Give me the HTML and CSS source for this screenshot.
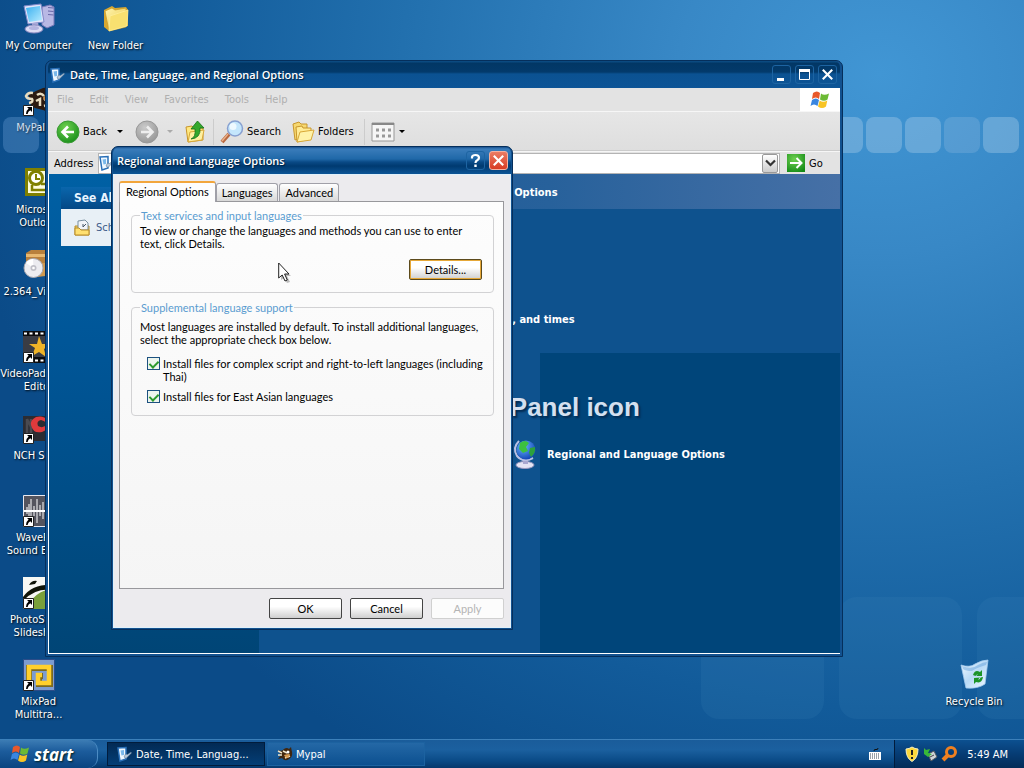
FILE: index.html
```html
<!DOCTYPE html>
<html lang="en">
<head>
  <meta charset="UTF-8">
  <meta name="viewport" content="width=device-width, initial-scale=1.0">
  <title>Regional and Language Options</title>
  <link rel="stylesheet" href="styles.css">
</head>
<body>
  <!-- shared icons -->
  <svg class="defs" aria-hidden="true">
    <defs>
      <linearGradient id="gScreen" x1="0" y1="0" x2="1" y2="1"><stop offset="0" stop-color="#3ab0f0"/><stop offset="1" stop-color="#b8ecff"/></linearGradient>
      <linearGradient id="gFolder" x1="0" y1="0" x2="1" y2="1"><stop offset="0" stop-color="#fff6b0"/><stop offset="1" stop-color="#eac440"/></linearGradient>
      <radialGradient id="gGreen" cx=".4" cy=".3" r=".8"><stop offset="0" stop-color="#6fd050"/><stop offset="1" stop-color="#128a16"/></radialGradient>
      <radialGradient id="gGrey" cx=".4" cy=".3" r=".8"><stop offset="0" stop-color="#cacaca"/><stop offset="1" stop-color="#929292"/></radialGradient>
      <radialGradient id="gGlobe" cx=".35" cy=".3" r=".8"><stop offset="0" stop-color="#6cb8ff"/><stop offset="1" stop-color="#0a3ab0"/></radialGradient>
      <linearGradient id="gBin" x1="0" y1="0" x2="1" y2="1"><stop offset="0" stop-color="#f4fbff"/><stop offset=".5" stop-color="#b8daf6"/><stop offset="1" stop-color="#f0f8ff"/></linearGradient>
      <symbol id="flag" viewBox="0 0 20 18">
        <path d="M3 2Q7-1 10 2L9 8Q6 5 2 8Z" fill="#e8582a"/>
        <path d="M11 2.500Q14 5 19 2.500L17.500 8.500Q14 11 10 8.500Z" fill="#6cba34"/>
        <path d="M2 9Q6 6 9 9L7.500 15Q4 12 .5 15Z" fill="#3a86e0"/>
        <path d="M9.700 9.500Q13 12 17.300 9.500L16 15.500Q12 18.500 8 15.500Z" fill="#f8c424"/>
      </symbol>
      <symbol id="panel" viewBox="0 0 16 16">
        <path d="M1 2L9 1.500V13L3 15Z" fill="#f0f8ff" stroke="#2a70b8" stroke-width="1.500"/>
        <path d="M3.500 4.500L7 4V9L4.500 9.500Z" fill="#7ab8ea"/>
        <path d="M7 11L8.500 8L10.500 8.500L14 6L14.500 7L11 10.500L9 12.500Z" fill="#b8c8d8" stroke="#46688a" stroke-width=".5"/>
      </symbol>
      <symbol id="shortcut" viewBox="0 0 11 11">
        <path d="M.5.5H10.500V10.500H.5Z" fill="#fff" stroke="#222"/>
        <path d="M4 2H9V7L7.300 5.300Q5 6.500 4.600 9H3Q2.800 6 5.600 3.600Z" fill="#000"/>
      </symbol>
      <symbol id="raccoon" viewBox="0 0 16 16">
        <path d="M1 4Q5 6 7 3Q10 1 12 3L14 1L15 6Q16 11 12 13Q8 16 5 12L1 13L4 9Z" fill="#40260f"/>
        <path d="M1 5L5 7M1 9L5 9M6 5L10 7M8 12L13 10" stroke="#f0e4c8" stroke-width="1.500"/>
        <circle cx="11" cy="6" r="1.500" fill="#fff"/><path d="M7 9Q10 8 13 8L11 12Q8 12 7 9Z" fill="#d89a50"/>
      </symbol>
      <symbol id="close" viewBox="0 0 18 18">
        <path d="M4 4L14 14M14 4L4 14" stroke="#fff" stroke-width="2.200"/>
      </symbol>
      <symbol id="folders" viewBox="0 0 24 24">
        <path d="M2 4L8 2L10 4L16 4V16L4 20Z" fill="#f6d870" stroke="#c8962c"/>
        <path d="M5 7L11 6L12 8L20 8V19L6 22Z" fill="#ffeb94" stroke="#c8962c"/>
        <path d="M6 22L9 12L23 10L20 20Z" fill="#fff2a8" stroke="#d8a838"/>
      </symbol>
    </defs>
  </svg>

  <main class="desktop">
    <div class="tiles"><i></i><i></i><i></i><i></i><i></i></div>
    <div class="left-tile"></div>
    <div class="big-tiles"><i></i><i></i><i></i></div>

    <nav class="icons">
      <a class="icon" href="#">
        <svg width="32" height="32" viewBox="0 0 32 32">
          <path d="M19 4L27 2L31 4V22L24 25L19 22Z" fill="#b8b8e4" stroke="#7878b8"/>
          <path d="M25 4.500L30.500 5M25 8L30.500 8.500M25 11.500L30.500 12" stroke="#6868a8"/>
          <path d="M1 3L18 1L21 19L5 21Z" fill="#e0e4fa" stroke="#8088c8"/>
          <path d="M3 5L17 3L19 17L6 19Z" fill="url(#gScreen)"/>
          <path d="M9 20L15 19.500L16 24H9Z" fill="#a8a8d8"/>
          <ellipse cx="11" cy="26" rx="9" ry="4" fill="#dcdcf4" stroke="#8888c0"/>
          <ellipse cx="11" cy="25" rx="5" ry="2" fill="#b4b4e0"/>
        </svg>
        <span>My Computer</span>
      </a>
      <a class="icon" href="#">
        <svg width="32" height="32" viewBox="0 0 32 32">
          <path d="M5 7Q9 9 13 6L20 3Q28 2 31 8V24Q26 28 20 25L12 23L8 20Z" fill="#2c1a10"/>
          <path d="M10 8Q5 7 3 11Q4 14 9 14Q11 17 6 18M14 10Q18 7 21 11M13 16L17 14V21M21 15Q26 12 26 16M21 21L28 19" fill="none" stroke="#e8dcc0" stroke-width="2.500"/>
          <circle cx="22" cy="13" r="2" fill="#c88848"/>
          <use href="#shortcut" y="20" width="11" height="11"/>
        </svg>
        <span>MyPal 68</span>
      </a>
      <a class="icon" href="#">
        <svg width="32" height="32" viewBox="0 0 32 32">
          <path d="M2 1H31V29H2Z" fill="#808000"/><path d="M5 4H29V26H5Z" fill="#fffde0"/>
          <circle cx="13" cy="11" r="6.500" fill="#fff" stroke="#808000" stroke-width="3"/>
          <path d="M13 7V12H17" fill="none" stroke="#808000" stroke-width="2"/>
          <path d="M9 18V23H24V17H18" fill="none" stroke="#808000" stroke-width="2.500"/>
        </svg>
        <span>Microsoft<br>Outlook</span>
      </a>
      <a class="icon" href="#">
        <svg width="32" height="32" viewBox="0 0 32 32">
          <path d="M3 4L8 1H31V14H3Z" fill="#b8803c"/><path d="M3 5H31V8H3Z" fill="#e8b870"/><path d="M10 14H31V26L14 28Z" fill="#d09a50"/>
          <circle cx="10.500" cy="19" r="9.500" fill="#ececf0" stroke="#a8a8b0"/>
          <path d="M10.500 19L3 14A9 9 0 0 1 10 10Z" fill="#fff"/>
          <circle cx="10.500" cy="19" r="3" fill="#c0c0c8"/><circle cx="10.500" cy="19" r="1.300" fill="#fff"/>
        </svg>
        <span>2.364_Video...</span>
      </a>
      <a class="icon" href="#">
        <svg width="32" height="32" viewBox="0 0 32 32">
          <path d="M0 0H32V32H0Z" fill="#0c0c0e"/><path d="M0 5H32V26H0Z" fill="#3a3c44"/>
          <path d="M1 2.500H32M12 29.500H32" stroke="#fff" stroke-width="2" stroke-dasharray="3 2.500"/>
          <path d="M16 5L19 13H27L21 18L23 26L16 21L9 25L12 17L6 13L14 13Z" fill="#f0b428"/>
          <use href="#shortcut" y="21" width="11" height="11"/>
        </svg>
        <span>VideoPad Video<br>Editor</span>
      </a>
      <a class="icon" href="#">
        <svg width="32" height="32" viewBox="0 0 32 32">
          <path d="M0 3H32V28H0Z" fill="#2c2c32"/>
          <path d="M4 6V22M4 6L8 14M8 6V22" stroke="#4a4a50" stroke-width="2.500"/>
          <path d="M25 7Q20 2 13 4Q7 7 8 12Q10 21 19 19L25 16V11Q20 16 15 13Q13 8 18 7Q22 8 23 10Z" fill="#e03a3c"/>
          <use href="#shortcut" y="20" width="11" height="11"/>
        </svg>
        <span>NCH Suite</span>
      </a>
      <a class="icon" href="#">
        <svg width="32" height="32" viewBox="0 0 32 32">
          <path d="M.5.5H31.500V31.500H.5Z" fill="#54545e" stroke="#e8e8f0"/>
          <path d="M1 16H31" stroke="#fff" stroke-width="2"/>
          <path d="M4 12V19M6 9V22M8 4V27M11 11V21M14 4V28M17 10V21M20 7V24M23 11V20M26 8V23M29 11V20" stroke="#fff"/>
          <use href="#shortcut" y="21" width="11" height="11"/>
        </svg>
        <span>WavePad<br>Sound Editor</span>
      </a>
      <a class="icon" href="#">
        <svg width="32" height="32" viewBox="0 0 32 32">
          <path d="M0 0H32V32H0Z" fill="#f8f8f4"/><path d="M4 32Q10 14 32 11V32Z" fill="#7aa03a"/>
          <path d="M0 20Q10 6 32 8V13Q12 10 0 24Z" fill="#101408"/><path d="M6 8Q9 3 14 4L12 7Z" fill="#101408"/>
          <use href="#shortcut" y="21" width="11" height="11"/>
        </svg>
        <span>PhotoStage<br>Slideshow</span>
      </a>
      <a class="icon" href="#">
        <svg width="32" height="32" viewBox="0 0 32 32">
          <path d="M.5.5H31.500V31.500H.5Z" fill="#7c9cd0" stroke="#2c4c88"/>
          <path d="M6 26V9H27V25H16V17H20" fill="none" stroke="#7a6a20" stroke-width="6"/>
          <path d="M6 25V8H26V24H15V16H19" fill="none" stroke="#ffd02c" stroke-width="4.500"/>
          <use href="#shortcut" y="21" width="11" height="11"/>
        </svg>
        <span>MixPad<br>Multitra...</span>
      </a>
      <a class="icon" href="#">
        <svg width="32" height="32" viewBox="0 0 32 32">
          <path d="M4 7L12 3L15 5L26 4L28 7V23L9 28L4 24Z" fill="#d8a830"/>
          <path d="M5 8L12 5L15 7L26 5V24L9 28Z" fill="url(#gFolder)" stroke="#c89a28" stroke-width=".7"/>
          <path d="M9 28L10 13L28 7L27 23Z" fill="#f8e070" stroke="#fff0a0" stroke-width=".7"/>
        </svg>
        <span>New Folder</span>
      </a>
    </nav>

    <a class="icon bin" href="#">
      <svg width="32" height="32" viewBox="0 0 32 32">
        <path d="M3 6Q12 9 17 5Q24 1 30 1L27 25Q20 30 8 29Q6 20 3 6Z" fill="url(#gBin)" stroke="#a4ccf0" stroke-width=".8"/>
        <path d="M4 7Q14 11 20 6Q25 3 29 3L28 6Q18 9 14 12Q8 12 5 10Z" fill="#6aa4dc" opacity=".5"/>
        <path d="M15 16Q17 10 22 13L24 11V17H18L20 15.500Q18 15 17.500 17ZM25 18Q24 25 18 23L16 25V19L22 18.500L20 20.500Q22 21 22.500 18.500Z" fill="#1c9428"/>
      </svg>
      <span>Recycle Bin</span>
    </a>

    <section class="window explorer">
      <header class="titlebar">
        <svg width="16" height="16"><use href="#panel"/></svg>
        <h1>Date, Time, Language, and Regional Options</h1>
        <div class="captions">
          <button aria-label="Minimize"><svg width="17" height="17"><path d="M4 12H11V15H4Z" fill="#fff"/></svg></button>
          <button aria-label="Maximize"><svg width="17" height="17"><path d="M3.500 4.500H13.500V13.500H3.500Z" fill="none" stroke="#fff"/><path d="M3 4.500H14" stroke="#fff" stroke-width="3"/></svg></button>
          <button aria-label="Close"><svg width="17" height="17"><use href="#close"/></svg></button>
        </div>
      </header>

      <nav class="menubar">
        <button>File</button><button>Edit</button><button>View</button><button>Favorites</button><button>Tools</button><button>Help</button>
        <div class="brand"><svg width="20" height="18"><use href="#flag"/></svg></div>
      </nav>

      <div class="toolbar">
        <button class="nav-btn">
          <svg width="24" height="24" viewBox="0 0 24 24"><circle cx="12" cy="12" r="11" fill="url(#gGreen)" stroke="#3a9a34"/><path d="M18 12H7M12 6.500L6.500 12L12 17.500" fill="none" stroke="#fff" stroke-width="2.600"/></svg>
          Back
        </button>
        <i class="drop"></i>
        <button class="nav-btn forward" aria-label="Forward">
          <svg width="24" height="24" viewBox="0 0 24 24"><circle cx="12" cy="12" r="11" fill="url(#gGrey)" stroke="#989898"/><path d="M6 12H17M12 6.500L17.500 12L12 17.500" fill="none" stroke="#eee" stroke-width="2.600"/></svg>
        </button>
        <i class="drop faint"></i>
        <button class="nav-btn up" aria-label="Up">
          <svg width="24" height="24" viewBox="0 0 24 24">
            <path d="M3 7L9 6L11 8L20 8V20L5 22Z" fill="#ffe880" stroke="#c8962c"/><path d="M5 22L7 12L21 10L19 20Z" fill="#fff0a0" stroke="#d8a838"/>
            <path d="M8 19Q13 17 12 9H8L14.500 1L21 8H17Q18 18 8 19Z" fill="#34a82c" stroke="#14701a" stroke-width=".8"/>
          </svg>
        </button>
        <i class="sep"></i>
        <button class="nav-btn">
          <svg width="24" height="24" viewBox="0 0 24 24"><path d="M2 22L9 14" stroke="#b86840" stroke-width="4"/><path d="M2 21L8 14" stroke="#eab088" stroke-width="1.500"/><circle cx="15" cy="8.500" r="7.500" fill="#c4e6fc" stroke="#88a0d0" stroke-width="1.500"/><circle cx="13" cy="6.500" r="3.500" fill="#eef9ff"/></svg>
          Search
        </button>
        <button class="nav-btn folders">
          <svg width="24" height="24"><use href="#folders"/></svg>
          Folders
        </button>
        <i class="sep"></i>
        <button class="nav-btn views" aria-label="Views">
          <svg width="24" height="24" viewBox="0 0 24 24">
            <path d="M1 3H23V21H1Z" fill="#f6f6f6" stroke="#989898"/><path d="M1 4H23" stroke="#888" stroke-width="2"/>
            <path d="M5 10H8M11 10H14M17 10H20M5 16H8M11 16H14M17 16H20" stroke="#999" stroke-width="3"/>
          </svg>
        </button>
        <i class="drop"></i>
      </div>

      <form class="address">
        <label for="address">Address</label>
        <div class="address-box">
          <svg width="16" height="16"><use href="#panel"/></svg>
          <input id="address" type="text">
          <button type="button" aria-label="Show addresses"><svg width="11" height="8"><path d="M1 1.500L5.500 6L10 1.500" fill="none" stroke="#333" stroke-width="2.200"/></svg></button>
        </div>
        <button type="button" class="go">
          <svg width="18" height="18"><path d="M0 0H18V18H0Z" fill="url(#gGreen)"/><path d="M3 9H14M9.500 4L14.500 9L9.500 14" fill="none" stroke="#fff" stroke-width="2"/></svg>
          Go
        </button>
      </form>

      <div class="content">
        <aside>
          <div class="see-also">
            <h2>See Also</h2>
            <a href="#">
              <svg width="18" height="18" viewBox="0 0 18 18"><path d="M2 7H16V16H2Z" fill="#f4d868" stroke="#b88c28"/><path d="M5 2L12 1L15 4V11H5Z" fill="#f0f4f8" stroke="#7890a0"/><path d="M10 5V8L13 5" fill="none" stroke="#456"/><path d="M2 16V9H6L8 11H16V16Z" fill="#ffe070" stroke="#b88c28"/></svg>
              Scheduled Tasks
            </a>
          </div>
        </aside>
        <div class="pane">
          <h2 class="band">Date, Time, Language, and Regional Options</h2>
          <div class="tasks">
            <p>Change the format of numbers, dates, and times</p>
            <h3>or pick a Control Panel icon</h3>
            <a href="#">
              <svg width="32" height="32" viewBox="0 0 32 32">
                <ellipse cx="16" cy="27" rx="9" ry="3.500" fill="#e4e4f4" stroke="#9898c0"/><path d="M14 21H19V26H14Z" fill="#a8a8d0"/>
                <path d="M10 3Q3 10 8 18Q14 25 24 20" fill="none" stroke="#b8c0e4" stroke-width="2"/>
                <circle cx="17" cy="12" r="9.500" fill="url(#gGlobe)"/>
                <path d="M11 5Q16 1 20 5L17 9L19 13L14 15L10 11Z" fill="#3cc040"/><path d="M21 10L26 9Q27 15 22 19L20 15Z" fill="#2ca03c"/>
              </svg>
              Regional and Language Options
            </a>
          </div>
        </div>
      </div>
    </section>

    <section class="window dialog" role="dialog" aria-labelledby="dialogTitle">
      <header class="titlebar">
        <h1 id="dialogTitle">Regional and Language Options</h1>
        <div class="captions">
          <button aria-label="Help"><svg width="17" height="17"><path d="M5 6.500V5Q5.500 3 8.500 3Q12 3 12 5.700Q12 7.200 10.200 8.300Q8.500 9.200 8.500 11" fill="none" stroke="#fff" stroke-width="2.200"/><path d="M7.300 12.500H9.700V15H7.300Z" fill="#fff"/></svg></button>
          <button class="red" aria-label="Close"><svg width="17" height="17"><use href="#close"/></svg></button>
        </div>
      </header>
      <div class="dialog-body">
        <div class="tabs" role="tablist">
          <button class="active" role="tab">Regional Options</button>
          <button role="tab">Languages</button>
          <button role="tab">Advanced</button>
        </div>
        <div class="sheet">
          <fieldset>
            <legend>Text services and input languages</legend>
            <p>To view or change the languages and methods you can use to enter text, click Details.</p>
            <div class="right"><button class="btn focus">Details...</button></div>
          </fieldset>
          <fieldset class="support">
            <legend>Supplemental language support</legend>
            <p>Most languages are installed by default. To install additional languages, select the appropriate check box below.</p>
            <div class="check">
              <input type="checkbox" id="complex" checked>
              <label for="complex">Install files for complex script and right-to-left languages (including Thai)</label>
            </div>
            <div class="check">
              <input type="checkbox" id="eastAsian" checked>
              <label for="eastAsian">Install files for East Asian languages</label>
            </div>
          </fieldset>
        </div>
        <footer>
          <button class="btn">OK</button>
          <button class="btn">Cancel</button>
          <button class="btn" disabled>Apply</button>
        </footer>
      </div>
    </section>

    <svg class="cursor" width="14" height="22" viewBox="0 0 14 22">
      <path d="M3 4L13 14H9L12 20L9 21L6 16L3 18Z" fill="#000" opacity=".25"/>
      <path d="M.7 1V16L4.200 13L7 19L9.300 18L6.600 12H11Z" fill="#fff" stroke="#222"/>
    </svg>
  </main>

  <footer class="taskbar">
    <button class="start"><svg width="20" height="18"><use href="#flag"/></svg>start</button>
    <button class="task current"><svg width="16" height="16"><use href="#panel"/></svg>Date, Time, Languag...</button>
    <button class="task"><svg width="16" height="16"><use href="#raccoon"/></svg>Mypal</button>
    <svg class="keyboard" width="14" height="14" viewBox="0 0 14 14"><path d="M6 4Q6 2 8 2.500Q10 3 10 1" fill="none" stroke="#111"/><path d="M1 5H13V13H1Z" fill="#fff"/><path d="M2 7H12M2 9H12M2 11H12" stroke="#345" stroke-dasharray="1 1"/></svg>
    <div class="tray">
      <svg width="16" height="16"><path d="M8 1Q11 3 14 3Q14 12 8 15.500Q2 12 2 3Q5 3 8 1Z" fill="#fcd83c" stroke="#f8f0c0"/><path d="M8 4V9M8 11V13" stroke="#222" stroke-width="2"/></svg>
      <svg width="16" height="16"><path d="M6 8L12 5L15 11L9 15Z" fill="#d0d4d8" stroke="#505860"/><path d="M8 11L12 9" stroke="#444"/><path d="M2 2L4 4L8 3L6 7L10 8L6 11L2 8Z" fill="#38b838"/></svg>
      <svg width="18" height="16"><circle cx="11" cy="6" r="4.500" fill="none" stroke="#f08020" stroke-width="3"/><path d="M8 9L3 14" stroke="#f08020" stroke-width="4"/></svg>
      <time>5:49 AM</time>
    </div>
  </footer>
</body>
</html>
```
FILE: styles.css
```css
* {
  box-sizing: border-box;
}
body {
  margin: 0;
  min-height: 100vh;
  display: flex;
  flex-direction: column;
  overflow: hidden;
  font-family: "DejaVu Sans Condensed", "DejaVu Sans", sans-serif;
  font-size: 11px;
  line-height: 13px;
}
button, input {
  font: inherit;
  color: inherit;
  padding: 0;
  margin: 0;
  border: none;
  background: none;
}
h1, h2, h3, p, fieldset {
  margin: 0;
}
a {
  color: inherit;
  text-decoration: none;
}
svg {
  flex: none;
}
.defs {
  position: absolute;
  width: 0;
  height: 0;
}

/* desktop */
.desktop {
  position: relative;
  flex: 1;
  overflow: hidden;
  background: radial-gradient(ellipse 90% 110% at 86% 10%, #4196d4 0%, #3888c6 22%, #2270ae 52%, #125b9a 78%, #0b4b88 100%);
}
.tiles {
  position: absolute;
  top: 117px;
  right: 5px;
  display: flex;
  gap: 3px;
}
.tiles i, .left-tile {
  width: 36px;
  height: 36px;
  border-radius: 8px;
  background: rgba(160, 200, 230, 0.42);
}
.tiles i:nth-child(4) {
  background: rgba(150, 190, 225, 0.28);
}
.left-tile {
  position: absolute;
  left: 3px;
  top: 117px;
  background: rgba(110, 160, 215, 0.35);
}
.big-tiles {
  position: absolute;
  left: 701px;
  top: 597px;
  display: flex;
  gap: 15px;
}
.big-tiles i {
  width: 123px;
  height: 122px;
  border-radius: 18px;
  background: rgba(70, 140, 190, 0.14);
}
.icons {
  display: grid;
  grid-template-rows: repeat(9, 82px);
  grid-auto-columns: 77px;
  grid-auto-flow: column;
  width: max-content;
}
.icon {
  display: flex;
  flex-direction: column;
  align-items: center;
  gap: 4px;
  padding-top: 3px;
  color: #fff;
  text-align: center;
  text-shadow: 1px 1px 2px #000;
  white-space: nowrap;
}
.bin {
  position: absolute;
  right: 11px;
  bottom: 31px;
  width: 78px;
}

/* windows */
.window {
  position: absolute;
  display: flex;
  flex-direction: column;
  border: 1px solid #052f5c;
  border-radius: 7px 7px 0 0;
  background: #12518f;
}
.titlebar {
  display: flex;
  align-items: center;
  gap: 4px;
  height: 27px;
  padding: 0 3px 0 2px;
  border-radius: 6px 6px 0 0;
  color: #fff;
}
.titlebar h1 {
  flex: 1;
  font-family: "Open Sans", sans-serif;
  font-size: 11px;
  font-weight: 600;
  text-shadow: 1px 1px 1px #01203f;
}
.captions {
  display: flex;
  gap: 4px;
}
.captions button {
  width: 19px;
  height: 19px;
  border: 1px solid #1d64a2;
  border-radius: 3px;
}
.captions svg {
  display: block;
}
.captions .red {
  border-color: #f4b0a0;
  background: linear-gradient(#ea7c64, #d83c24);
}

/* explorer */
.explorer {
  left: 45px;
  top: 60px;
  right: 181px;
  bottom: 82px;
  padding: 0 2px 2px;
}
.explorer > .titlebar {
  background: linear-gradient(#0b4a80 0, #0b4a80 1px, #023765 2px, #033a6b 11px, #0b5292 13px, #0d5496 100%);
}
.menubar {
  display: flex;
  align-items: center;
  gap: 16px;
  height: 24px;
  padding-left: 9px;
  border-bottom: 1px solid #f6f6f6;
  background: #e3e3e3;
  color: #b0b0b0;
}
.brand {
  display: flex;
  align-items: center;
  justify-content: center;
  width: 40px;
  height: 23px;
  margin-left: auto;
  background: #fff;
}
.toolbar {
  display: flex;
  align-items: center;
  height: 40px;
  padding: 0 8px;
  border-bottom: 1px solid #f6f6f6;
  background: linear-gradient(#e6e6e6, #dedede);
  box-shadow: inset 0 -1px #ccc;
}
.nav-btn {
  display: flex;
  align-items: center;
  gap: 3px;
}
.drop {
  margin: 0 12px 0 10px;
  border: 3px solid transparent;
  border-top-color: #000;
  border-bottom: none;
}
.drop.faint {
  margin: 0 10px 0 8px;
  border-top-color: #aaa;
}
.sep {
  width: 1px;
  height: 26px;
  margin: 0 6px;
  background: #ccc;
}
.folders {
  margin-left: 10px;
}
.folders + .sep {
  margin-left: 10px;
}
.views + .drop {
  margin-left: 4px;
}
.address {
  display: flex;
  align-items: center;
  height: 22px;
  padding-left: 6px;
  background: #e3e3e3;
}
.address-box {
  display: flex;
  align-items: center;
  flex: 1;
  height: 21px;
  margin: 0 7px 0 5px;
  padding: 0 1px 0 0;
  border: 1px solid #b4b4b4;
  background: #fff;
}
.address-box input {
  flex: 1;
  min-width: 0;
}
.address-box button {
  width: 16px;
  height: 19px;
  border: 1px solid #999;
  border-radius: 2px;
  background: linear-gradient(#fff, #ccc);
}
.go {
  display: flex;
  align-items: center;
  gap: 4px;
  width: 53px;
}
.content {
  display: flex;
  flex: 1;
  border: solid #fff;
  border-width: 0 0 1px 1px;
}
aside {
  width: 210px;
  padding: 13px 12px;
  background: linear-gradient(#0060a4, #005698 35%, #004576);
}
.see-also h2 {
  padding: 5px 13px 4px;
  background: linear-gradient(#0a66ac, #034886);
  color: #e8f4ff;
  font-size: 12px;
}
.see-also a {
  display: flex;
  align-items: center;
  gap: 5px;
  height: 37px;
  padding: 0 12px;
  background: #e8f0f6;
  color: #3c5a88;
}
.pane {
  flex: 1;
  display: flex;
  flex-direction: column;
  color: #fff;
}
.band {
  padding: 12px 49px 10px;
  background: linear-gradient(90deg, #1c5896, #27619b 50%, #4670a6);
  font-size: 11px;
}
.tasks {
  flex: 1;
  padding: 104px 37px 0;
  background: #0e528e linear-gradient(#00457a, #00457a) no-repeat right bottom / 300px 300px;
  font-weight: bold;
}
.tasks p {
  padding-left: 6px;
}
.tasks h3 {
  margin: 65px 0 15px;
  color: #d4e0f0;
  font-family: "Liberation Sans", sans-serif;
  font-size: 26px;
  line-height: 32px;
  text-shadow: 2px 2px 2px #032c54;
}
.tasks a {
  display: flex;
  align-items: center;
  gap: 6px;
  margin-left: 213px;
}

/* dialog */
.dialog {
  left: 111px;
  top: 146px;
  width: 402px;
  padding: 0 1px 1px;
  font-family: Lato, "Liberation Sans", sans-serif;
}
.dialog > .titlebar {
  padding: 0 3px 0 4px;
  background: linear-gradient(#174f8c 0, #3a7cba 2px, #1f68a8 12px, #0a4a86 15px, #003a70 19px, #0c5496 100%);
}
.dialog-body {
  padding: 6px 6px 8px 5px;
  border: 1px solid #e0f0fa;
  background: #ecebee;
}
.tabs {
  display: flex;
  align-items: flex-end;
}
.tabs button {
  height: 18px;
  margin-right: 1px;
  padding: 0 5px 1px;
  border: 1px solid #a0a0a8;
  border-bottom: none;
  border-radius: 3px 3px 0 0;
  background: linear-gradient(#fff, #d8d8d8);
}
.tabs .active {
  position: relative;
  height: 21px;
  margin: 0 0 -1px;
  padding: 0 6px 3px;
  border-top: 2px solid #f2a63c;
  background: #fdfdfd;
}
.sheet {
  display: flex;
  flex-direction: column;
  gap: 8px;
  min-height: 388px;
  padding: 7px 9px 7px 11px;
  border: 1px solid #98989c;
  background: linear-gradient(#fdfdfd, #f5f5f5);
}
fieldset {
  min-width: 0;
  padding: 2px 11px 12px 8px;
  border: 1px solid #d2d2d4;
  border-radius: 4px;
}
.support {
  padding-top: 6px;
  padding-right: 4px;
}
legend {
  padding: 0 1px;
  color: #5a9cd0;
}
fieldset p {
  margin-bottom: 9px;
}
.right {
  display: flex;
  justify-content: flex-end;
}
.check {
  display: flex;
  gap: 3px;
  margin: 0 0 7px 7px;
}
.support p {
  margin-bottom: 11px;
}
.check:last-child {
  margin-bottom: 0;
}
.check input {
  appearance: none;
  flex: none;
  width: 13px;
  height: 13px;
  border: 1px solid #1c5180;
  background: #edf5ed;
}
.check input:checked::before {
  content: "";
  display: block;
  width: 4px;
  height: 7px;
  margin: 1px auto;
  border: solid #2c9a2c;
  border-width: 0 2px 2px 0;
  transform: rotate(45deg);
}
.btn {
  width: 73px;
  height: 21px;
  border: 1px solid #444;
  border-radius: 2px;
  background: linear-gradient(#fff 40%, #cfcfcf);
}
.btn.focus {
  border-color: #5c4a1c;
  box-shadow: inset 0 0 0 1px #e6a838;
}
.btn:disabled {
  border-color: #d0d0d0;
  background: #fcfcfc;
  color: #b4b4b4;
}
.dialog-body > footer {
  display: flex;
  justify-content: flex-end;
  gap: 8px;
  padding-top: 9px;
}
.cursor {
  position: absolute;
  left: 278px;
  top: 262px;
}

/* taskbar */
.taskbar {
  display: flex;
  align-items: center;
  height: 29px;
  border-top: 1px solid #3c80ba;
  background: linear-gradient(#1a5c9a, #1b609f 35%, #0a4a86 75%, #06386c);
  color: #fff;
}
.start {
  display: flex;
  align-items: center;
  gap: 4px;
  width: 98px;
  height: 28px;
  margin-right: 9px;
  padding-left: 10px;
  border-right: 1px solid #4c8cc4;
  border-radius: 0 10px 10px 0;
  background: linear-gradient(#3c7cb4, #1c5c9c 40%, #0a4480);
  font-family: "Open Sans", sans-serif;
  font-size: 17px;
  font-style: italic;
  font-weight: bold;
  text-shadow: 1px 1px 2px #022;
}
.task {
  display: flex;
  align-items: center;
  gap: 3px;
  width: 158px;
  height: 24px;
  margin-right: 2px;
  padding-left: 9px;
  border: 1px solid #1c62a0;
  background: linear-gradient(#2468a6, #0c5090);
}
.task.current {
  border-color: #011c3c;
  background: linear-gradient(#022a54, #043e76);
}
.keyboard {
  margin-left: auto;
  margin-right: 12px;
}
.tray {
  display: flex;
  align-items: center;
  gap: 2px;
  height: 28px;
  padding: 0 16px 0 9px;
  border-left: 1px solid #021c3c;
  background: linear-gradient(#0c5090, #063c74 50%, #032c58);
}
.tray time {
  margin-left: 7px;
}
```
